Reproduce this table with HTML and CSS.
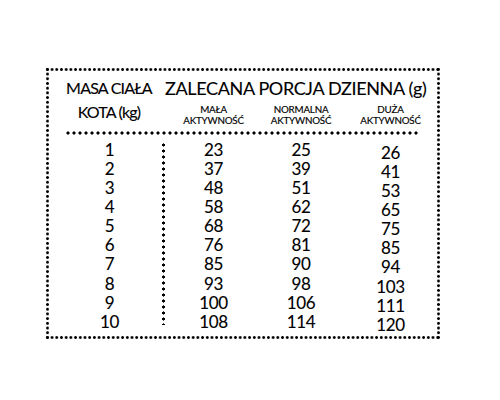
FILE: index.html
```html
<!DOCTYPE html>
<html lang="pl">
<head>
<meta charset="utf-8">
<title>Zalecana porcja dzienna</title>
<link rel="stylesheet" href="styles.css">
</head>
<body>
<div class="card">
  <div class="grid">
    <div class="h-weight">MASA CIAŁA<br>KOTA (kg)</div>
    <div class="h-portion">
      <div class="title">ZALECANA PORCJA DZIENNA (g)</div>
      <div class="subs">
        <div class="sub">MAŁA<br>AKTYWNOŚĆ</div>
        <div class="sub">NORMALNA<br>AKTYWNOŚĆ</div>
        <div class="sub">DUŻA<br>AKTYWNOŚĆ</div>
      </div>
    </div>
    <div class="sep"></div>
    <div class="col c1"><span>1</span><span>2</span><span>3</span><span>4</span><span>5</span><span>6</span><span>7</span><span>8</span><span>9</span><span>10</span></div>
    <div class="vdiv"></div>
    <div class="col c2"><span>23</span><span>37</span><span>48</span><span>58</span><span>68</span><span>76</span><span>85</span><span>93</span><span>100</span><span>108</span></div>
    <div class="col c3"><span>25</span><span>39</span><span>51</span><span>62</span><span>72</span><span>81</span><span>90</span><span>98</span><span>106</span><span>114</span></div>
    <div class="col c4"><span>26</span><span>41</span><span>53</span><span>65</span><span>75</span><span>85</span><span>94</span><span>103</span><span>111</span><span>120</span></div>
  </div>
</div>
</body>
</html>
```

FILE: styles.css
```css
html, body {
  margin: 0;
  padding: 0;
  background: #ffffff;
}
body {
  font-family: Lato, "Liberation Sans", sans-serif;
  color: #000;
  -webkit-text-stroke: 0.12px #000;
}
.card {
  box-sizing: border-box;
  margin: 67px 0 0 45px;
  width: 396px;
  height: 273px;
  padding: 9px 0 0 12px;
  background-image:
    radial-gradient(circle, #000 1.15px, transparent 1.6px),
    radial-gradient(circle, #000 1.15px, transparent 1.6px),
    radial-gradient(circle, #000 1.15px, transparent 1.6px),
    radial-gradient(circle, #000 1.15px, transparent 1.6px);
  background-size: 4.72px 5px, 4.72px 5px, 5px 4.72px, 5px 4.72px;
  background-position: 0 0, 0 100%, 0 0, 100% 0;
  background-repeat: round no-repeat, round no-repeat, no-repeat round, no-repeat round;
}
.grid {
  display: grid;
  grid-template-columns: 105px 3px 97px 78px 1fr;
  grid-template-rows: auto auto auto;
}
.h-weight {
  grid-column: 1 / 3;
  grid-row: 1;
  font-size: 16px;
  line-height: 24px;
  letter-spacing: -0.8px;
  text-align: center;
  padding-right: 4px;
}
.h-portion {
  grid-column: 3 / 6;
  grid-row: 1;
}
.title {
  margin-top: 2px;
  font-size: 18px;
  line-height: 20px;
  letter-spacing: -0.35px;
  white-space: nowrap;
}
.subs {
  display: grid;
  grid-template-columns: 97px 78px 1fr;
  margin-top: 5.6px;
}
.sub {
  font-size: 9.8px;
  line-height: 11px;
  letter-spacing: -0.2px;
  text-align: center;
  -webkit-text-stroke: 0.15px #000;
}
.sep {
  grid-column: 1 / 6;
  grid-row: 2;
  margin: 4.4px 0 0 8px;
  width: 355px;
  height: 6px;
  background-image: radial-gradient(circle, #000 1.35px, transparent 1.8px);
  background-size: 6px 6px;
  background-repeat: repeat-x;
}
.col {
  grid-row: 3;
  display: flex;
  flex-direction: column;
  align-items: center;
  margin-top: 3.9px;
  font-size: 17px;
  line-height: 19.1px;
  letter-spacing: -0.3px;
}
.c1 { grid-column: 1; }
.c2 { grid-column: 3; }
.c3 { grid-column: 4; }
.c4 { grid-column: 5; padding-top: 3px; }
.vdiv {
  grid-column: 2;
  grid-row: 3;
  margin: 6px 0 9px 0;
  background-image: radial-gradient(circle, #000 1.35px, transparent 1.8px);
  background-size: 3px 6px;
  background-repeat: repeat-y;
}
```
